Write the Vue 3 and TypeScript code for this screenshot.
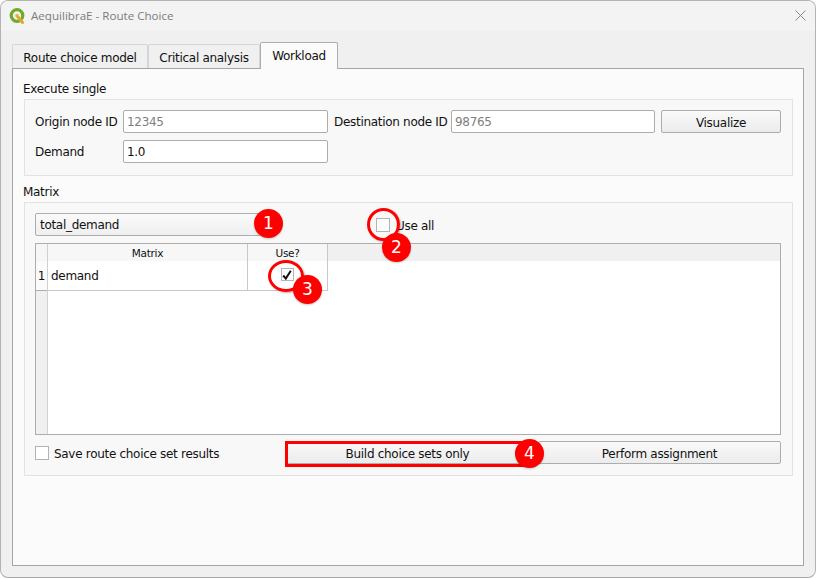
<script setup lang="ts">
const tabs = [
  { label: 'Route choice model', width: 136 },
  { label: 'Critical analysis', width: 112 },
  { label: 'Workload', width: 78, active: true },
]

const markers = [
  { n: 1, x: 253, y: 208 },
  { n: 2, x: 381, y: 232 },
  { n: 3, x: 292, y: 274 },
  { n: 4, x: 514, y: 438 },
]
</script>

<template>
  <div class="window">
    <header class="titlebar">
      <svg class="logo" width="16" height="16" viewBox="0 0 16 16">
        <circle cx="8" cy="7.5" r="5.8" fill="none" stroke="#72a82c" stroke-width="3.2" />
        <circle cx="8" cy="7.5" r="1.8" fill="#e8b83a" />
        <path d="M9 9 L13.5 14.5" stroke="#e0a92e" stroke-width="3" stroke-linecap="round" />
      </svg>
      <span class="title">AequilibraE - Route Choice</span>
      <svg class="close" width="11" height="11" viewBox="0 0 11 11">
        <path d="M0.5 0.5 L10.5 10.5 M10.5 0.5 L0.5 10.5" stroke="#8a8a8a" stroke-width="1" />
      </svg>
    </header>

    <div class="content">
      <nav class="tabs">
        <div
          v-for="tab in tabs"
          :key="tab.label"
          class="tab"
          :class="{ active: tab.active }"
          :style="{ width: `${tab.width}px` }"
        >
          {{ tab.label }}
        </div>
      </nav>

      <main class="panel">
        <div class="group-label">Execute single</div>
        <section class="group single">
          <div class="form-row">
            <label class="lbl origin">Origin node ID</label>
            <div class="input placeholder first">12345</div>
            <label class="lbl dest">Destination node ID</label>
            <div class="input placeholder">98765</div>
            <button class="btn visualize">Visualize</button>
          </div>
          <div class="form-row">
            <label class="lbl origin">Demand</label>
            <div class="input first">1.0</div>
          </div>
        </section>

        <div class="group-label second">Matrix</div>
        <section class="group matrix">
          <div class="combo-row">
            <div class="combo">total_demand</div>
            <span class="check-box use-all-box"></span>
            <span class="use-all">Use all</span>
          </div>

          <div class="table">
            <div class="thead">
              <div class="corner"></div>
              <div class="th name-col">Matrix</div>
              <div class="th use-col">Use?</div>
            </div>
            <div class="tbody">
              <div class="row-gutter">
                <div class="row-num">1</div>
              </div>
              <div class="cells">
                <div class="cell name-col">demand</div>
                <div class="cell use-col">
                  <span class="check-box small">
                    <svg width="10" height="10" viewBox="0 0 10 10">
                      <path d="M1.2 5.5 L3.8 8.6 L8.8 0.8" fill="none" stroke="#111" stroke-width="2" />
                    </svg>
                  </span>
                </div>
              </div>
            </div>
          </div>

          <div class="actions">
            <span class="check-box"></span>
            <span class="save-label">Save route choice set results</span>
            <button class="btn action build">Build choice sets only</button>
            <button class="btn action perform">Perform assignment</button>
          </div>
        </section>
      </main>
    </div>

    <!-- screenshot annotations -->
    <div class="ring ring-two"></div>
    <div class="ring ring-three"></div>
    <div class="outline"></div>
    <div
      v-for="m in markers"
      :key="m.n"
      class="marker"
      :style="{ left: `${m.x}px`, top: `${m.y}px` }"
    >
      {{ m.n }}
    </div>
  </div>
</template>

<style scoped>
.window {
  position: relative;
  box-sizing: border-box;
  width: 816px;
  height: 578px;
  background: #f0f0f0;
  border: 1px solid #b4b4b4;
  border-bottom-color: #a3aca0;
  border-radius: 8px;
  font-family: "DejaVu Sans", "Open Sans", sans-serif;
  font-size: 12px;
  letter-spacing: -0.3px;
  color: #111;
  overflow: hidden;
}

.titlebar {
  box-sizing: border-box;
  display: flex;
  align-items: center;
  height: 30px;
  background: #f3f3f3;
  padding: 0 4px 1px 8px;
}

.logo {
  margin-right: 6px;
}

.title {
  font-family: "Open Sans", sans-serif;
  font-size: 11.6px;
  letter-spacing: 0;
  color: #7c7c7c;
}

.close {
  margin-left: auto;
  margin-right: 5px;
  margin-bottom: 1px;
}

.content {
  padding: 11px 11px 0;
}

.tabs {
  display: flex;
  align-items: flex-end;
  height: 26px;
}

.tab {
  box-sizing: border-box;
  height: 24px;
  line-height: 27px;
  text-align: center;
  background: #f0f0f0;
  border: 1px solid #d5d5d5;
  border-bottom: none;
  border-radius: 2px 2px 0 0;
}

.tab.active {
  height: 27px;
  line-height: 27px;
  background: #fbfbfb;
  border-color: #adadad;
  margin-bottom: -1px;
  position: relative;
  z-index: 1;
}

.panel {
  box-sizing: border-box;
  width: 792px;
  height: 498px;
  background: #fbfbfb;
  border: 1px solid #a6a6a6;
  padding: 11px 10px 0 11px;
}

.group-label {
  height: 19px;
  line-height: 19px;
  margin-left: -1px;
}

.group-label.second {
  margin-top: 7px;
}

.group {
  box-sizing: border-box;
  width: 769px;
  background: #f8f8f8;
  border: 1px solid #e2e2e2;
}

.single {
  height: 77px;
  padding: 10px 0 0 10px;
}

.form-row {
  display: flex;
  align-items: center;
  height: 23px;
  margin-bottom: 7px;
}

.lbl {
  line-height: 23px;
  padding-top: 2px;
}

.lbl.origin {
  width: 88px;
}

.lbl.dest {
  width: 117px;
  margin-left: 6px;
  white-space: nowrap;
}

.input {
  box-sizing: border-box;
  width: 204px;
  height: 23px;
  line-height: 23px;
  padding-left: 3px;
  background: #fff;
  border: 1px solid #adadad;
  border-radius: 2px;
}

.input.first {
  width: 205px;
}

.placeholder {
  color: #808080;
}

.btn {
  box-sizing: border-box;
  height: 23px;
  font: inherit;
  letter-spacing: inherit;
  color: #111;
  background: linear-gradient(#f9f9f9, #ececec);
  border: 1px solid #adadad;
  border-radius: 2px;
  padding: 2px 0 0;
}

.visualize {
  width: 120px;
  margin-left: 6px;
}

.matrix {
  height: 274px;
  padding: 10px 11px 0 10px;
}

.combo-row {
  display: flex;
  align-items: center;
  height: 23px;
}

.combo {
  box-sizing: border-box;
  width: 226px;
  height: 23px;
  line-height: 21px;
  padding: 1px 0 0 4px;
  background: linear-gradient(#fafafa, #efefef);
  border: 1px solid #adadad;
  border-radius: 2px;
}

.check-box {
  box-sizing: border-box;
  display: inline-flex;
  align-items: center;
  justify-content: center;
  flex: none;
  width: 14px;
  height: 14px;
  background: #fff;
  border: 1px solid #b3b3b3;
}

.check-box.small {
  width: 13px;
  height: 13px;
}

.use-all-box {
  margin-left: 115px;
}

.use-all {
  margin-left: 6px;
  padding-top: 2px;
}

.table {
  box-sizing: border-box;
  height: 192px;
  margin-top: 7px;
  background: #fff;
  border: 1px solid #adadad;
  display: flex;
  flex-direction: column;
}

.thead {
  display: flex;
  height: 17px;
  background: #f0f0f0;
  font-size: 10.5px;
  line-height: 19px;
  text-align: center;
}

.corner {
  box-sizing: border-box;
  width: 12px;
  border-right: 1px solid #d0d0d0;
  background: #f6f6f6;
}

.th {
  box-sizing: border-box;
  background: #f7f7f7;
  border-right: 1px solid #c8c8c8;
}

.name-col {
  width: 200px;
}

.use-col {
  width: 80px;
}

.tbody {
  display: flex;
  flex: 1;
}

.row-gutter {
  box-sizing: border-box;
  width: 12px;
  background: #f0f0f0;
  border-right: 1px solid #d0d0d0;
}

.row-num {
  box-sizing: border-box;
  height: 30px;
  line-height: 30px;
  text-align: center;
  background: #fbfbfb;
  border-bottom: 1px solid #adadad;
}

.cells {
  display: flex;
  height: 30px;
}

.cell {
  box-sizing: border-box;
  border-right: 1px solid #c8c8c8;
  border-bottom: 1px solid #c8c8c8;
  line-height: 30px;
  padding-left: 3px;
}

.cell.use-col {
  display: flex;
  align-items: center;
  justify-content: center;
  padding: 0 1px 2px 0;
}

.actions {
  display: flex;
  align-items: center;
  height: 23px;
  margin-top: 6px;
}

.save-label {
  margin-left: 5px;
  width: 233px;
  padding-top: 2px;
  white-space: nowrap;
}

.action {
  flex: none;
}

.build {
  width: 241px;
}

.perform {
  width: 243px;
  margin-left: 10px;
}

.ring {
  position: absolute;
  box-sizing: border-box;
  border: 3px solid #ff0000;
  border-radius: 50%;
  box-shadow: 1px 1px 2px rgba(0, 0, 0, 0.3);
}

.ring-two {
  left: 366px;
  top: 207px;
  width: 33px;
  height: 33px;
}

.ring-three {
  left: 267px;
  top: 259px;
  width: 36px;
  height: 32px;
}

.outline {
  position: absolute;
  box-sizing: border-box;
  left: 284px;
  top: 440px;
  width: 240px;
  height: 26px;
  border: 3px solid #ff0000;
}

.marker {
  position: absolute;
  width: 29px;
  height: 29px;
  line-height: 29px;
  border-radius: 50%;
  background: #ff0000;
  color: #fff;
  text-align: center;
  font-size: 17px;
  letter-spacing: 0;
  box-shadow: 0 1px 2px rgba(0, 0, 0, 0.2);
}
</style>

<style>
html,
body {
  background: #fff;
}
</style>
